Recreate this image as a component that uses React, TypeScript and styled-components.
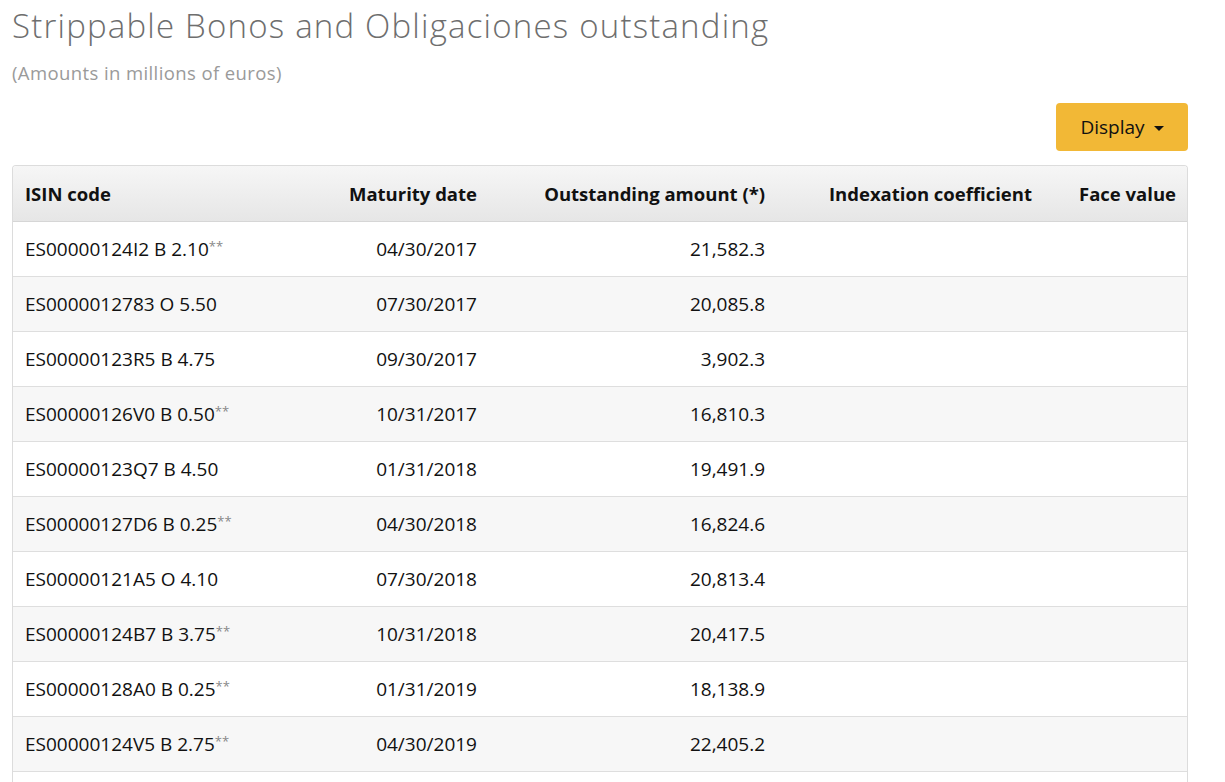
import React from "react";
import styled, { createGlobalStyle } from "styled-components";

const Global = createGlobalStyle`
  html, body { margin: 0; padding: 0; background: #fff; }
  body { font-family: "Open Sans", "Lato", sans-serif; color: #111; }
  *, *::before, *::after { box-sizing: border-box; }
`;

const Page = styled.div`
  padding: 6px 37px 0 12px;
  display: flex;
  flex-direction: column;
`;

const Title = styled.h1`
  margin: 0;
  font-family: "Open Sans", sans-serif;
  font-weight: 300;
  font-size: 33px;
  letter-spacing: 1.2px;
  line-height: 40px;
  color: #6e6e6e;
`;

const Subtitle = styled.p`
  margin: 16px 0 0;
  font-size: 18.5px;
  letter-spacing: 0.4px;
  line-height: 22px;
  color: #9a9a9a;
`;

const Toolbar = styled.div`
  display: flex;
  justify-content: flex-end;
  margin-top: 19px;
`;

const DisplayButton = styled.button`
  display: flex;
  align-items: center;
  gap: 9px;
  height: 48px;
  width: 132px;
  justify-content: center;
  border: none;
  border-radius: 4px;
  background: #f2b836;
  color: #111;
  font-family: "Open Sans", sans-serif;
  font-size: 19px;
`;

const Caret = styled.span`
  width: 0;
  height: 0;
  border-left: 5px solid transparent;
  border-right: 5px solid transparent;
  border-top: 5px solid #111;
  margin-top: 2px;
`;

const TableWrap = styled.div`
  margin-top: 14px;
  border: 1px solid #dcdcdc;
  border-bottom: none;
  border-radius: 4px 4px 0 0;
  overflow: hidden;
`;

const Table = styled.table`
  width: 100%;
  border-collapse: collapse;
  table-layout: fixed;
  font-size: 19px;
`;

const Th = styled.th<{ $align?: string; $w: number }>`
  width: ${(p) => p.$w}px;
  height: 55px;
  padding: 0 12px;
  text-align: ${(p) => p.$align || "right"};
  font-weight: 700;
  font-size: 18.5px;
  color: #111;
  white-space: nowrap;
  background: linear-gradient(#f6f6f6, #e6e6e6);
  border-bottom: 1px solid #d6d6d6;
`;

const Tr = styled.tr<{ $odd: boolean }>`
  background: ${(p) => (p.$odd ? "#f7f7f7" : "#fff")};
`;

const Td = styled.td<{ $align?: string }>`
  height: 55px;
  padding: 0 12px;
  text-align: ${(p) => p.$align || "right"};
  border-bottom: 1px solid #dedede;
  color: #111;
  white-space: nowrap;
`;

const Stars = styled.span`
  color: #888;
  font-size: 13px;
  vertical-align: 5px;
`;

const rows: [string, boolean, string, string][] = [
  ["ES00000124I2 B 2.10", true, "04/30/2017", "21,582.3"],
  ["ES0000012783 O 5.50", false, "07/30/2017", "20,085.8"],
  ["ES00000123R5 B 4.75", false, "09/30/2017", "3,902.3"],
  ["ES00000126V0 B 0.50", true, "10/31/2017", "16,810.3"],
  ["ES00000123Q7 B 4.50", false, "01/31/2018", "19,491.9"],
  ["ES00000127D6 B 0.25", true, "04/30/2018", "16,824.6"],
  ["ES00000121A5 O 4.10", false, "07/30/2018", "20,813.4"],
  ["ES00000124B7 B 3.75", true, "10/31/2018", "20,417.5"],
  ["ES00000128A0 B 0.25", true, "01/31/2019", "18,138.9"],
  ["ES00000124V5 B 2.75", true, "04/30/2019", "22,405.2"],
  ["ES00000121L2 O 4.60", false, "07/30/2019", "21,120.7"],
];

export default function App() {
  return (
    <Page>
      <Global />
      <Title>Strippable Bonos and Obligaciones outstanding</Title>
      <Subtitle>(Amounts in millions of euros)</Subtitle>
      <Toolbar>
        <DisplayButton>
          Display <Caret />
        </DisplayButton>
      </Toolbar>
      <TableWrap>
        <Table>
          <thead>
            <tr>
              <Th $align="left" $w={278}>ISIN code</Th>
              <Th $w={198}>Maturity date</Th>
              <Th $w={288}>Outstanding amount (*)</Th>
              <Th $w={267}>Indexation coefficient</Th>
              <Th $w={144}>Face value</Th>
            </tr>
          </thead>
          <tbody>
            {rows.map(([isin, stars, date, amount], i) => (
              <Tr key={isin} $odd={i % 2 === 1}>
                <Td $align="left">
                  {isin}
                  {stars && <Stars>**</Stars>}
                </Td>
                <Td>{date}</Td>
                <Td>{amount}</Td>
                <Td />
                <Td />
              </Tr>
            ))}
          </tbody>
        </Table>
      </TableWrap>
    </Page>
  );
}
